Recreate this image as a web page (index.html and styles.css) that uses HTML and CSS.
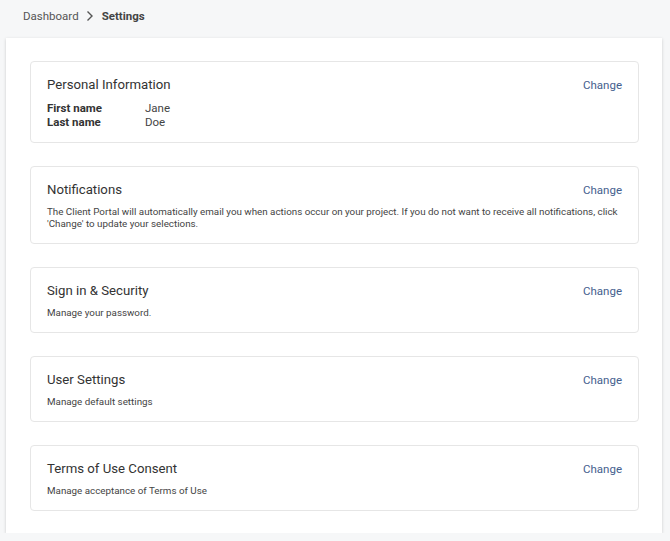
FILE: index.html
```html
<!DOCTYPE html>
<html>
<head>
    <title>Settings</title>
    <link rel="stylesheet" href="styles.css">
</head>
<body>
    <div class="breadcrumb">
        <a href="#" class="crumb">Dashboard</a>
        <svg class="chevron" width="8" height="12" viewBox="0 0 8 12"><path d="M1.5 1.5 L6 6 L1.5 10.5" fill="none" stroke="#555" stroke-width="1.4"/></svg>
        <span class="current">Settings</span>
    </div>
    <div class="panel">
        <div class="card">
            <div class="card-head">
                <h2>Personal Information</h2>
                <a href="#" class="change">Change</a>
            </div>
            <div class="fields">
                <span class="label">First name</span><span class="value">Jane</span>
                <span class="label">Last name</span><span class="value">Doe</span>
            </div>
        </div>
        <div class="card">
            <div class="card-head">
                <h2>Notifications</h2>
                <a href="#" class="change">Change</a>
            </div>
            <p class="desc">The Client Portal will automatically email you when actions occur on your project. If you do not want to receive all notifications, click 'Change' to update your selections.</p>
        </div>
        <div class="card">
            <div class="card-head">
                <h2>Sign in &amp; Security</h2>
                <a href="#" class="change">Change</a>
            </div>
            <p class="desc">Manage your password.</p>
        </div>
        <div class="card">
            <div class="card-head">
                <h2>User Settings</h2>
                <a href="#" class="change">Change</a>
            </div>
            <p class="desc">Manage default settings</p>
        </div>
        <div class="card">
            <div class="card-head">
                <h2>Terms of Use Consent</h2>
                <a href="#" class="change">Change</a>
            </div>
            <p class="desc">Manage acceptance of Terms of Use</p>
        </div>
    </div>
</body>
</html>
```

FILE: styles.css
```css
body {
    margin: 0;
    padding: 0 8px 0 6px;
    background: #f6f7f8;
    font-family: Roboto, "Liberation Sans", Arial, sans-serif;
    color: #333;
}
.breadcrumb {
    display: flex;
    align-items: center;
    height: 32px;
    padding: 0 17px;
    font-size: 11.5px;
}
.crumb {
    color: #555;
    text-decoration: none;
}
.chevron {
    margin: 0 8px 0 7px;
}
.current {
    font-weight: bold;
    color: #444;
}
.panel {
    margin-top: 6px;
    background: #fff;
    padding: 23px 23px 22px 24px;
    box-shadow: 0 1px 3px rgba(0, 0, 0, 0.18);
    display: flex;
    flex-direction: column;
    gap: 23px;
}
.card {
    border: 1px solid #e6e6e6;
    border-radius: 4px;
    padding: 13px 16px 13px 16px;
}
.card-head {
    display: flex;
    justify-content: space-between;
    align-items: center;
}
h2 {
    margin: 0;
    font-size: 13.2px;
    line-height: 20px;
    font-weight: normal;
    color: #333;
}
.change {
    font-size: 11.5px;
    color: #45608e;
    text-decoration: none;
}
.fields {
    display: grid;
    grid-template-columns: 98px auto;
    margin-top: 6px;
    font-size: 11.5px;
    line-height: 14px;
}
.label {
    font-weight: bold;
    color: #333;
}
.value {
    color: #444;
}
.desc {
    margin: 6px 0 0;
    font-size: 9.8px;
    line-height: 12px;
    color: #444;
}
```
